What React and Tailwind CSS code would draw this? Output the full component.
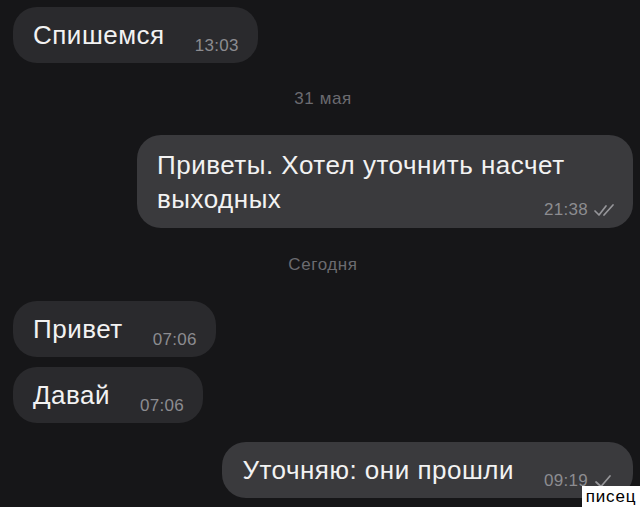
import React from 'react';

const font = { fontFamily: '"Liberation Sans", Arial, sans-serif' };

const Check = ({ double }) => (
  <svg width="26" height="16" viewBox="0 0 26 16" className="ml-[4px]" fill="none" stroke="#96969a" strokeWidth="1.7" strokeLinecap="round" strokeLinejoin="round">
    {double ? (
      <>
        <path d="M3 9 L7 13 L14 4" />
        <path d="M12 13 L21 3" />
      </>
    ) : (
      <path d="M4 9 L9 13.5 L18 3" />
    )}
  </svg>
);

const Time = ({ value, check }) => (
  <div className="flex items-center text-[17px] leading-[20px] tracking-[0.3px] text-[#8c8c90] translate-y-[4px]">
    <span>{value}</span>
    {check && <Check double={check === 'double'} />}
  </div>
);

const Bubble = ({ text, time, out, check }) => (
  <div className={`flex items-end gap-[30px] h-[56px] pl-[20px] rounded-[24px] text-[26px] leading-[34px] tracking-[0.5px] text-[#f2f2f2] ${out ? 'self-end bg-[#3a3a3d] pr-[15px]' : 'self-start bg-[#2a2a2d] pr-[19px]'} pb-[11px]`}>
    <span>{text}</span>
    <Time value={time} check={check} />
  </div>
);

const DateLabel = ({ children }) => (
  <div className="h-[36px] flex items-center justify-center text-[17px] tracking-[0.6px] text-[#6b6b70]">{children}</div>
);

export default function App() {
  return (
    <div style={font} className="relative w-[640px] h-[507px] overflow-hidden bg-[#161618]">
      <div className="flex flex-col pl-[13px] pr-[7px] pt-[7px]">
        <Bubble text="Спишемся" time="13:03" />
        <div className="h-[72px] flex items-center justify-center">
          <DateLabel>31 мая</DateLabel>
        </div>
        <div className="self-end w-[496px] bg-[#3a3a3d] rounded-[24px] pl-[20px] pr-[15px] pt-[13px] pb-[12px] text-[26px] leading-[34px] tracking-[0.5px] text-[#f2f2f2]">
          <div>Приветы. Хотел уточнить насчет</div>
          <div className="flex items-end justify-between">
            <span>выходных</span>
            <Time value="21:38" check="double" />
          </div>
        </div>
        <div className="h-[73px] flex items-center justify-center">
          <DateLabel>Сегодня</DateLabel>
        </div>
        <div className="flex flex-col gap-[10px]">
          <Bubble text="Привет" time="07:06" />
          <Bubble text="Давай" time="07:06" />
        </div>
        <div className="mt-[19px] flex flex-col">
          <Bubble text="Уточняю: они прошли" time="09:19" out check="single" />
        </div>
      </div>
      <div className="absolute right-0 bottom-0 w-[58px] h-[21px] bg-white flex items-center justify-center text-[17px] leading-none text-black tracking-[0.8px]">
        писец
      </div>
    </div>
  );
}
